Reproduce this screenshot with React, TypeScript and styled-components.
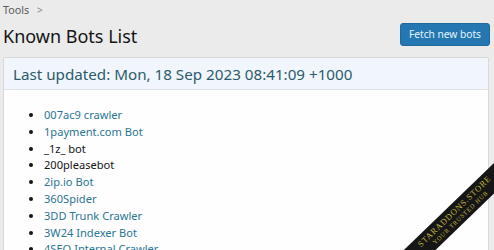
import React from "react";
import styled, { createGlobalStyle } from "styled-components";

const Global = createGlobalStyle`
  html, body { margin: 0; padding: 0; }
  body {
    background: #ebebeb;
    font-family: "Noto Sans", "Open Sans", sans-serif;
    overflow: hidden;
    width: 494px;
    height: 250px;
  }
`;

const Page = styled.div`
  position: relative;
  width: 494px;
  height: 250px;
  overflow: hidden;
  padding: 0 5px 0 3px;
  box-sizing: border-box;
`;

const Breadcrumb = styled.div`
  display: flex;
  align-items: center;
  gap: 8px;
  height: 20px;
  font-size: 10.7px;
  color: #5a5a5a;
`;

const Chevron = styled.span`
  font-size: 10px;
  color: #8a8a8a;
`;

const TitleRow = styled.div`
  display: flex;
  align-items: center;
  justify-content: space-between;
  height: 32px;
`;

const Title = styled.h1`
  margin: 0;
  font-weight: 400;
  font-size: 18px;
  color: #141414;
`;

const Button = styled.button`
  background: #2577b1;
  color: #e6f4fd;
  border: 1px solid #1e6aa0;
  border-radius: 3px;
  font-family: inherit;
  font-size: 10.2px;
  height: 23px;
  padding: 0 8px;
  margin-right: -1px;
  margin-bottom: 4px;
`;

const Block = styled.div`
  margin-top: 5px;
  border: 1px solid #d6d8da;
  border-radius: 2px;
  background: #fefefe;
  height: 300px;
`;

const BlockHeader = styled.div`
  background: #f0f6fc;
  border-bottom: 1px solid #dfe3e6;
  color: #2d5a6a;
  font-size: 15.2px;
  height: 31px;
  display: flex;
  align-items: center;
  padding-left: 9px;
`;

const List = styled.ul`
  margin: 0;
  padding: 17px 0 0 40px;
  list-style: disc;
  font-size: 11.1px;
  line-height: 16.8px;
`;

const Item = styled.li<{ $link?: boolean }>`
  color: ${(p) => (p.$link ? "#2a7592" : "#141414")};
  &::marker { color: #141414; font-size: 12px; }
`;

const Ribbon = styled.div`
  position: absolute;
  left: 362px;
  top: 203px;
  width: 190px;
  height: 22px;
  background: #161616;
  transform: rotate(-44deg);
  transform-origin: center;
  display: flex;
  flex-direction: column;
  align-items: center;
  justify-content: center;
  color: #c2b53e;
  font-family: "Liberation Serif", serif;
  line-height: 1;
`;

const RibbonMain = styled.span`
  font-size: 8.5px;
  letter-spacing: 0.8px;
`;

const RibbonSub = styled.span`
  font-size: 6.2px;
  letter-spacing: 0.8px;
  margin-top: 2px;
`;

const bots: [string, boolean][] = [
  ["007ac9 crawler", true],
  ["1payment.com Bot", true],
  ["_1z_ bot", false],
  ["200pleasebot", false],
  ["2ip.io Bot", true],
  ["360Spider", true],
  ["3DD Trunk Crawler", true],
  ["3W24 Indexer Bot", true],
  ["4SEO Internal Crawler", true],
];

export default function App() {
  return (
    <>
      <Global />
      <Page>
        <Breadcrumb>
          <span>Tools</span>
          <Chevron>&gt;</Chevron>
        </Breadcrumb>
        <TitleRow>
          <Title>Known Bots List</Title>
          <Button>Fetch new bots</Button>
        </TitleRow>
        <Block>
          <BlockHeader>Last updated: Mon, 18 Sep 2023 08:41:09 +1000</BlockHeader>
          <List>
            {bots.map(([name, link]) => (
              <Item key={name} $link={link}>{name}</Item>
            ))}
          </List>
        </Block>
        <Ribbon>
          <RibbonMain>STARADDONS.STORE</RibbonMain>
          <RibbonSub>YOUR TRUSTED HUB</RibbonSub>
        </Ribbon>
      </Page>
    </>
  );
}
